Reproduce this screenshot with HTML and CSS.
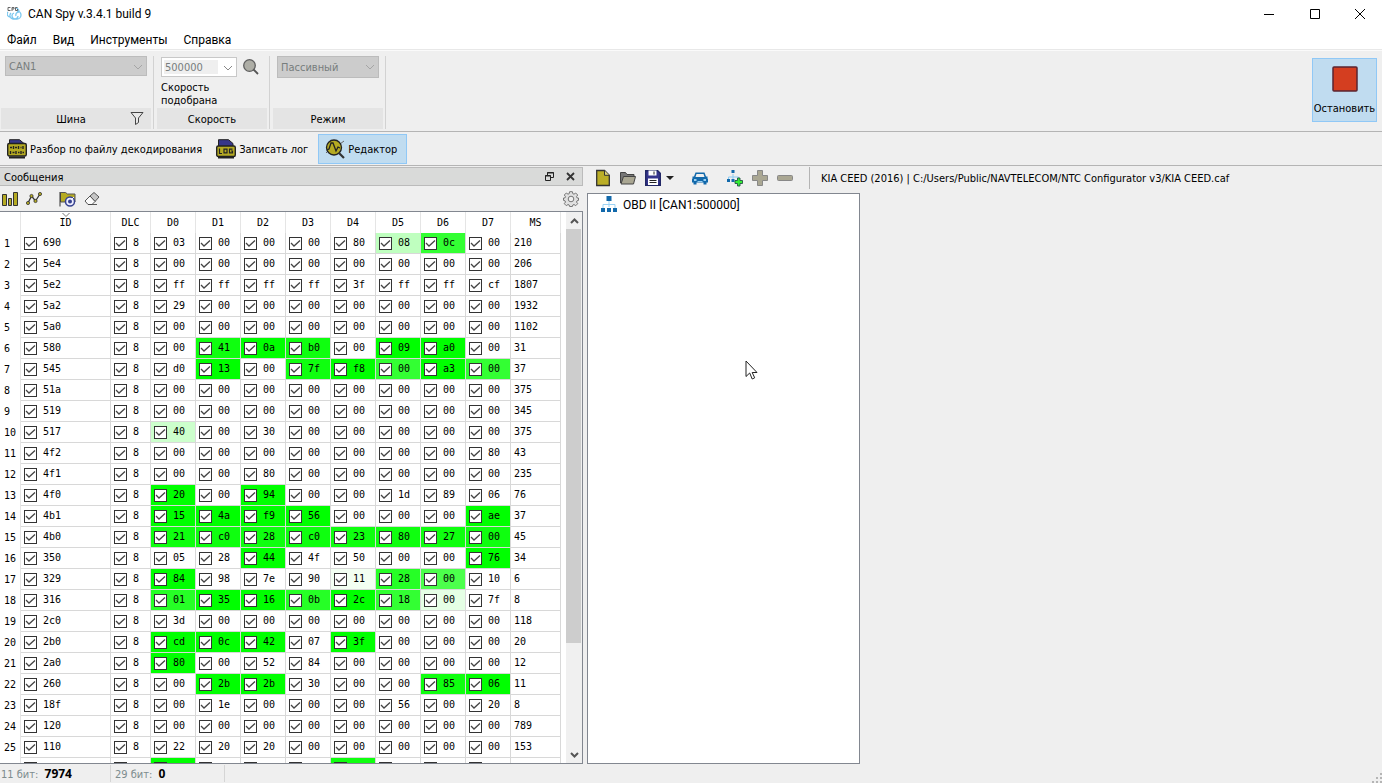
FILE: index.html
```html
<!DOCTYPE html>
<html lang="ru">
<head>
  <meta charset="UTF-8">
  <title>CAN Spy v.3.4.1 build 9</title>
  <meta name="viewport" content="width=device-width, initial-scale=1.0">
  <link rel="stylesheet" href="styles.css">
</head>
<body>

  <header class="titlebar">
    <svg class="app-icon" width="16" height="16" viewBox="0 0 16 16" fill="none">
      <path d="M1 6a3 3 0 0 0 2 5M8 2a3.500 3.500 0 0 1 4 3M10 5a4 4 0 1 1 0 8H6a3.500 3.500 0 0 1-2-6M7 7a3 3 0 1 0 4 3M12 6a3 3 0 0 0-3 4" stroke="#7cc8ef" stroke-width="1.300"/>
      <path d="M3.500 1.500H1v3h2.500M5 5v-3.500h2v1.500H5M10.500 1.500H8.500v3h2V3" stroke="#666"/>
    </svg>
    <h1>CAN Spy v.3.4.1 build 9</h1>
    <div class="window-buttons">
      <button type="button" aria-label="Свернуть"><svg width="12" height="12" viewBox="0 0 12 12"><path d="M1 6.500h10" stroke="#000"/></svg></button>
      <button type="button" aria-label="Развернуть"><svg width="12" height="12" viewBox="0 0 12 12"><path d="M1.500 1.500h9v9h-9z" fill="none" stroke="#000"/></svg></button>
      <button type="button" aria-label="Закрыть"><svg width="12" height="12" viewBox="0 0 12 12"><path d="M1 1l10 10M11 1L1 11" stroke="#000"/></svg></button>
    </div>
  </header>

  <nav class="menu">
    <button type="button">Файл</button>
    <button type="button">Вид</button>
    <button type="button">Инструменты</button>
    <button type="button">Справка</button>
  </nav>

  <section class="ribbon">
    <div class="group group-bus">
      <div class="group-body">
        <div class="combo">
          <select aria-label="Шина" disabled><option>CAN1</option></select>
          <svg width="10" height="6" viewBox="0 0 10 6"><path d="M1 1l4 4 4-4" fill="none" stroke="#a5a5a5"/></svg>
        </div>
      </div>
      <div class="group-caption">
        <span>Шина</span>
        <button type="button" class="filter" aria-label="Фильтр">
          <svg width="14" height="14" viewBox="0 0 14 14"><path d="M1 1.500h12L8.500 7v4.500l-3 2V7z" fill="#e8e8e8" stroke="#444"/></svg>
        </button>
      </div>
    </div>
    <div class="group">
      <div class="group-body">
        <div class="speed">
          <div class="combo combo-edit">
            <select aria-label="Скорость" disabled><option>500000</option></select>
            <svg width="10" height="6" viewBox="0 0 10 6"><path d="M1 1l4 4 4-4" fill="none" stroke="#888"/></svg>
          </div>
          <button type="button" aria-label="Определить скорость">
            <svg width="16" height="16" viewBox="0 0 16 16"><circle cx="6.500" cy="6.500" r="5.800" fill="#aeaea6" stroke="#5f5f5f" stroke-width="1.300"/><path d="M10.500 10.500L15 15" stroke="#555" stroke-width="1.800"/></svg>
          </button>
        </div>
        <p class="speed-note">Скорость<br>подобрана</p>
      </div>
      <div class="group-caption"><span>Скорость</span></div>
    </div>
    <div class="group">
      <div class="group-body">
        <div class="combo combo-mode">
          <select aria-label="Режим" disabled><option>Пассивный</option></select>
          <svg width="10" height="6" viewBox="0 0 10 6"><path d="M1 1l4 4 4-4" fill="none" stroke="#a5a5a5"/></svg>
        </div>
      </div>
      <div class="group-caption"><span>Режим</span></div>
    </div>
    <button type="button" class="stop">
      <svg width="26" height="26" viewBox="0 0 26 26"><rect x="1" y="1" width="24" height="24" rx="1" fill="#d43e20" stroke="#5a2530" stroke-width="1.500"/></svg>
      <span>Остановить</span>
    </button>
  </section>

  <div class="toolbar">
    <button type="button">
      <svg width="20" height="20" viewBox="0 0 20 20">
        <path d="M2.500 5V.7h10L17 4.500V6" fill="#36368a" stroke="#222"/>
        <rect x=".7" y="4.500" width="18.600" height="12.500" rx="1.500" fill="#b5aa22" stroke="#222" stroke-width="1.400"/>
        <path d="M2 18.500h16" stroke="#222" stroke-width="2"/>
        <path d="M3 8.500h2M6.500 7v3M8 8.500h2M11.500 7v3M13.500 8.500h1M16 7v3M3.500 12v3M5.500 13.500h2M9 12v3M11 13.500h1.500M14 12v3M15.500 13.500H17" stroke="#222" stroke-width="1.400"/>
      </svg>
      <span>Разбор по файлу декодирования</span>
    </button>
    <button type="button">
      <svg width="20" height="20" viewBox="0 0 20 20">
        <path d="M2.500 7V.7h10L17 4.500V7" fill="#36368a" stroke="#222"/>
        <rect x=".7" y="7" width="18.600" height="10.500" rx="1.500" fill="#b5aa22" stroke="#222" stroke-width="1.400"/>
        <path d="M2 18.500h16" stroke="#222" stroke-width="2"/>
        <path d="M3.500 9.500v5H6M8 10.200h3v3.600H8zM16.500 10.200h-3v3.600h3V12H15" fill="none" stroke="#222" stroke-width="1.200"/>
      </svg>
      <span>Записать лог</span>
    </button>
    <button type="button" class="active">
      <svg width="20" height="20" viewBox="0 0 20 20">
        <path d="M1 14l3-3M15 5l4-3" stroke="#666"/>
        <circle cx="9" cy="8.500" r="7.500" fill="#b5aa22" stroke="#222" stroke-width="1.300"/>
        <path d="M2 11l2-1 2-6h2l3 8 2-4 2 1" fill="none" stroke="#222" stroke-width="1.300"/>
        <path d="M14 14l5 5" stroke="#333" stroke-width="2.200"/>
      </svg>
      <span>Редактор</span>
    </button>
  </div>

  <main class="workspace">
    <section class="dock">
      <div class="dock-title">
        <h2>Сообщения</h2>
        <button type="button" aria-label="Открепить"><svg width="9" height="9" viewBox="0 0 9 9" fill="none" stroke="#222"><path d="M2.500 3V.5h6v5H6M2 1h7"/><path d="M.5 3.500h5v5h-5zM0 4h6"/></svg></button>
        <button type="button" aria-label="Закрыть панель"><svg width="9" height="9" viewBox="0 0 9 9"><path d="M1 1l7 7M8 1L1 8" stroke="#333" stroke-width="1.800"/></svg></button>
      </div>

      <div class="dock-tools">
        <button type="button" aria-label="Гистограмма"><svg width="16" height="16" viewBox="0 0 16 16" fill="#b5aa22" stroke="#333"><path d="M.5 3.500h4v11h-4zM6.500 7.500h3v7h-3zM11.500 1.500h4v13h-4z"/></svg></button>
        <button type="button" aria-label="График"><svg width="16" height="16" viewBox="0 0 16 16"><path d="M2 12l3.500-7 4 5L14 3" fill="none" stroke="#333" stroke-width="1.300"/><g fill="#b5aa22" stroke="#333" stroke-width=".8"><circle cx="2" cy="12" r="1.600"/><circle cx="5.500" cy="5" r="1.600"/><circle cx="9.500" cy="10" r="1.600"/><circle cx="14" cy="3" r="1.600"/></g></svg></button>
        <button type="button" class="flag" aria-label="Метка"><svg width="17" height="16" viewBox="0 0 17 16"><path d="M1.500 11V1.500h5l2 1.500h7.500v8z" fill="#b5aa22" stroke="#555"/><path d="M1 1v14.500" stroke="#333"/><circle cx="11" cy="10.500" r="4.500" fill="#eef" stroke="#36428f" stroke-width="1.500"/><circle cx="11" cy="10.500" r="2" fill="#36428f"/><path d="M12 9l3-3" stroke="#eef"/></svg></button>
        <button type="button" aria-label="Очистить"><svg width="16" height="16" viewBox="0 0 16 16" stroke="#444" stroke-width=".9"><path d="M6 5l4-3.500 5 4.500-4 4.500z" fill="#c5c5c5"/><path d="M6 5l5 5.500-3 3H4L1 10z" fill="#fafafa"/><path d="M4 13.500h9"/></svg></button>
        <button type="button" class="gear" aria-label="Настройки"><svg width="16" height="16" viewBox="0 0 16 16" fill="none" stroke="#777"><path d="M6.600.7h2.800l.4 2 1.200.5L12.700 2l2 2-1.200 1.700.5 1.200 1.500.1v2.400l-1.500.4-.5 1.200 1.200 1.700-2 2-1.700-1.200-1.200.5-.4 1.500H6.600l-.4-1.500-1.200-.5-1.700 1.200-2-2 1.200-1.700-.5-1.200-1.500-.4V7l1.500-.1.500-1.200L1.300 4l2-2L5 3.200l1.200-.5z" fill="#e0e0e0"/><circle cx="8" cy="8" r="2.800" fill="#efefef"/></svg></button>
      </div>

      <div class="grid-box">
        <div class="grid-view">
          <table id="messages">
            <colgroup>
              <col class="c-num"><col class="c-id"><col class="c-dlc">
              <col class="c-byte" span="8"><col class="c-ms">
            </colgroup>
            <thead>
              <tr>
                <th></th>
                <th class="sorted">ID<svg width="8" height="4" viewBox="0 0 8 4"><path d="M.5 0L4 3.500 7.500 0" fill="none" stroke="#777"/></svg></th>
                <th>DLC</th>
                <th>D0</th><th>D1</th><th>D2</th><th>D3</th>
                <th>D4</th><th>D5</th><th>D6</th><th>D7</th>
                <th>MS</th>
              </tr>
            </thead>
            <tbody></tbody>
          </table>
        </div>
        <div class="scrollbar">
          <button type="button" aria-label="Вверх"><svg width="9" height="6" viewBox="0 0 9 6"><path d="M1 5l3.500-3.500L8 5" fill="none" stroke="#555" stroke-width="2"/></svg></button>
          <div class="track"><div class="thumb"></div></div>
          <button type="button" aria-label="Вниз"><svg width="9" height="6" viewBox="0 0 9 6"><path d="M1 1l3.500 3.500L8 1" fill="none" stroke="#555" stroke-width="2"/></svg></button>
        </div>
      </div>
    </section>

    <section class="editor">
      <div class="editor-tools">
        <button type="button" aria-label="Новый"><svg width="16" height="18" viewBox="0 0 16 18"><path d="M1.700 1.500h7.800l4.800 4.800v10.200H1.700z" fill="#bbae27" stroke="#333" stroke-width="1.300"/><path d="M9.500 1.500v4.800h4.800" fill="#ddd37a" stroke="#333"/></svg></button>
        <button type="button" aria-label="Открыть"><svg width="16" height="18" viewBox="0 0 16 18" stroke="#444"><path d="M.5 14V3.500h5l1.500 2h7V8" fill="#777"/><path d="M1 15l2.500-7.500h12L13.500 15z" fill="#aaa793"/></svg></button>
        <button type="button" aria-label="Сохранить"><svg width="16" height="18" viewBox="0 0 16 18"><path d="M.7 1.700h12l2.600 2.600v12H.7z" fill="#35358c" stroke="#222866" stroke-width="1.400"/><path d="M3.500 1.500h8v5h-8zM3 9.500h10V16H3z" fill="#fff"/><path d="M9 2.500v3M4.500 11.500h7M4.500 13.500h7" stroke="#222"/></svg></button>
        <button type="button" class="drop" aria-label="Сохранить как"><svg width="8" height="4" viewBox="0 0 8 4"><path d="M0 0h8L4 4z" fill="#222"/></svg></button>
        <button type="button" class="car" aria-label="Автомобиль"><svg width="16" height="18" viewBox="0 0 16 18" fill="#1269ab"><path d="M3.500 3.500h9l1.500 4h1.500v2l.5.500v3.500h-1.500v2h-3v-2h-7v2h-3v-2H0V10l.5-.5v-2H2zM4.500 5L3.500 8h9l-1-3z" fill-rule="evenodd"/><path d="M2 10h2.500v2H2zM11.500 10H14v2h-2.500zM5.500 12h5v1h-5z" fill="#9bd0f2"/></svg></button>
        <button type="button" class="net" aria-label="Добавить сеть"><svg width="16" height="18" viewBox="0 0 16 18"><path d="M6 5v3M1.500 10V8h10v2M6 8v3" fill="none" stroke="#8acbf3"/><path d="M4.500 1h3v3h-3zM0 10h3v3H0zM4.500 10h3v3h-3z" fill="#1269ab"/><path d="M10.500 9h2.500v2.500h2.500v3H13V17h-2.500v-2.500H8v-3h2.500z" fill="#34ef34" stroke="#254" stroke-width=".9"/></svg></button>
        <button type="button" aria-label="Добавить"><svg width="16" height="18" viewBox="0 0 16 18"><path d="M5.500 1.500h5v5h5v5h-5v5h-5v-5h-5v-5h5z" fill="#aaa793" stroke="#888"/></svg></button>
        <button type="button" aria-label="Удалить"><svg width="16" height="18" viewBox="0 0 16 18"><rect x=".5" y="6.500" width="15" height="5" rx="1" fill="#aaa793" stroke="#888"/></svg></button>
        <span class="path">KIA CEED (2016) | C:/Users/Public/NAVTELECOM/NTC Configurator v3/KIA CEED.caf</span>
      </div>
      <div class="tree">
        <div class="tree-item">
          <svg width="16" height="16" viewBox="0 0 16 16"><path d="M8 5v6M2 12V8.500h12V12" fill="none" stroke="#9bd3f5"/><path d="M5.500 0h5v5h-5zM0 12h4v4H0zM6 12h4v4H6zM12 12h4v4h-4z" fill="#1269ab"/></svg>
          <span>OBD II [CAN1:500000]</span>
        </div>
        <svg class="pointer" width="13" height="20" viewBox="0 0 13 20"><path d="M1 1v15.500l3.700-3.500L7.200 19l2.500-1.200-2.500-5.300H12z" fill="#fff" stroke="#222"/></svg>
      </div>
    </section>
  </main>

  <footer class="status">
    <div>11 бит: <b>7974</b></div>
    <div>29 бит: <b>0</b></div>
    <svg class="grip" width="10" height="10" viewBox="0 0 10 10" fill="#b5b5b5"><path d="M8 0h2v2H8zM4 4h2v2H4zM8 4h2v2H8zM0 8h2v2H0zM4 8h2v2H4zM8 8h2v2H8z"/></svg>
  </footer>

  <script src="script.js"></script>
</body>
</html>
```
FILE: styles.css
```css
* {
  box-sizing: border-box;
}
body {
  margin: 0;
  height: 100vh;
  display: flex;
  flex-direction: column;
  overflow: hidden;
  background-color: #efefef;
  color: #000;
  font-family: "DejaVu Sans Condensed", "DejaVu Sans", sans-serif;
  font-size: 11px;
  line-height: 14px;
}
h1, h2, p {
  margin: 0;
  font-size: inherit;
  font-weight: normal;
}
button {
  display: flex;
  align-items: center;
  justify-content: center;
  padding: 0;
  border: none;
  background: none;
  color: inherit;
  font: inherit;
  white-space: nowrap;
}
svg {
  display: block;
  flex: none;
}

/* title and menu */
.titlebar {
  display: flex;
  align-items: center;
  height: 28px;
  padding-left: 7px;
  gap: 5px;
  background-color: #fff;
  font-family: Roboto, sans-serif;
  font-size: 12px;
}
.window-buttons {
  display: flex;
  margin-left: auto;
}
.window-buttons button {
  width: 46px;
  height: 28px;
}
.window-buttons button:last-child {
  width: 44px;
}
.menu {
  display: flex;
  height: 22px;
  padding: 2px 0 0 7px;
  gap: 16px;
  background-color: #fff;
  border-bottom: 1px solid #e8e8e8;
  font-family: Roboto, sans-serif;
  font-size: 12px;
}

/* ribbon */
.ribbon {
  display: flex;
  height: 82px;
  padding: 5px 5px 2px 1px;
  border-top: 1px solid #fafafa;
  border-bottom: 1px solid #b4b4b4;
}
.group {
  display: flex;
  flex-direction: column;
  width: 116px;
  padding: 0 2px 0 3px;
  border-right: 1px solid #d2d2d2;
}
.group-bus {
  width: 153px;
  padding-left: 0;
}
.group-body {
  flex: 1;
  padding: 0 4px;
}
.group-caption {
  position: relative;
  display: flex;
  align-items: center;
  justify-content: center;
  height: 21px;
  padding-top: 2px;
  background-color: #e4e4e4;
}
.group-bus .group-caption {
  padding-right: 10px;
}
.filter {
  position: absolute;
  right: 7px;
  top: 3px;
}
.combo {
  position: relative;
  width: 142px;
  height: 20px;
}
.combo select {
  display: block;
  width: 100%;
  height: 100%;
  padding: 2px 3px 0;
  border: 1px solid #bcbcbc;
  border-radius: 0;
  background-color: #ccc;
  color: #777d7d;
  font: inherit;
  opacity: 1;
  appearance: none;
}
.combo svg {
  position: absolute;
  right: 4px;
  top: 8px;
}
.combo-edit {
  width: 76px;
}
.combo-edit select {
  border-color: #c8c8c8;
  background: linear-gradient(#efefef, #efefef) 2px 2px / 54px 14px no-repeat #fff;
}
.combo-mode {
  width: 102px;
  height: 22px;
}
.speed {
  display: flex;
  align-items: center;
  gap: 6px;
  margin-top: 1px;
}
.speed-note {
  margin-top: 4px;
  line-height: 13px;
}
.stop {
  flex-direction: column;
  justify-content: flex-start;
  gap: 10px;
  min-width: 65px;
  height: 64px;
  margin: 2px 0 0 auto;
  padding-top: 7px;
  border: 1px solid #90c8f6;
  background-color: #c0dcf0;
}

/* main toolbar */
.toolbar {
  display: flex;
  align-items: center;
  height: 34px;
  padding-left: 6px;
  gap: 5px;
  border-bottom: 1px solid #b4b4b4;
}
.toolbar button {
  height: 30px;
  padding: 0 1px;
  gap: 3px;
}
.toolbar button + button {
  padding: 0 8px;
}
.toolbar span {
  padding-top: 2px;
}
.toolbar .active {
  padding: 0 9px 0 6px;
  margin-left: -3px;
  border: 1px solid #90c8f6;
  background-color: #c0dcf0;
}

.workspace {
  display: flex;
  flex: 1;
  min-height: 0;
  gap: 4px;
}

/* messages dock */
.dock {
  display: flex;
  flex-direction: column;
  flex: 0 0 583px;
  padding-top: 1px;
}
.dock-title {
  display: flex;
  align-items: center;
  height: 19px;
  padding: 0 7px 0 4px;
  gap: 12px;
  border: 1px solid #bbb;
  border-left: none;
  background-color: #d9dad9;
}
.dock-title h2 {
  margin-right: auto;
  padding-top: 2px;
}
.dock-tools {
  display: flex;
  align-items: center;
  height: 25px;
  padding: 0 4px 0 2px;
  gap: 8px;
}
.flag {
  margin-left: 9px;
}
.gear {
  margin-left: auto;
}
.grid-box {
  display: flex;
  flex: 1;
  min-height: 0;
  border: 1px solid #828790;
  border-left: none;
  background-color: #fff;
}
.grid-view {
  flex: 1;
  overflow: hidden;
}
table {
  width: 561px;
  table-layout: fixed;
  border-collapse: separate;
  border-spacing: 0;
  font-family: "DejaVu Sans Mono", monospace;
  font-size: 10px;
  line-height: 14px;
}
.c-num {
  width: 21px;
}
.c-id {
  width: 90px;
}
.c-dlc {
  width: 40px;
}
.c-byte {
  width: 45px;
}
.c-ms {
  width: 50px;
}
th, td {
  height: 21px;
  padding: 0;
  font-weight: normal;
}
th {
  border-right: 1px solid #e5e5e5;
}
td {
  padding-left: 3px;
  border-right: 1px solid #d8d8d8;
  border-bottom: 1px solid #d8d8d8;
}
tbody th {
  padding-left: 4px;
  text-align: left;
}
.sorted {
  position: relative;
}
.sorted svg {
  position: absolute;
  left: 41px;
  top: 1px;
}
td label {
  display: flex;
  align-items: center;
  gap: 6px;
}
td input {
  appearance: none;
  width: 13px;
  height: 13px;
  margin: 0;
  border: 1px solid #333;
  background-color: #fff;
}
td input:checked {
  background-image: url("data:image/svg+xml,%3Csvg xmlns='http://www.w3.org/2000/svg' viewBox='0 0 11 11'%3E%3Cpath d='M1 5l3 3 6-5.500' fill='none' stroke='%23444' stroke-width='1.300'/%3E%3C/svg%3E");
}
.scrollbar {
  display: flex;
  flex-direction: column;
  width: 16px;
  background-color: #f0f0f0;
}
.scrollbar button {
  height: 17px;
}
.track {
  flex: 1;
}
.thumb {
  width: 15px;
  height: 80%;
  background-color: #cdcdcd;
}

/* editor */
.editor {
  display: flex;
  flex-direction: column;
  flex: 1;
  min-width: 0;
}
.editor-tools {
  display: flex;
  align-items: center;
  height: 27px;
  padding: 0 0 4px 8px;
  gap: 9px;
}
.drop {
  margin-left: -4px;
}
.car {
  margin-left: 9px;
}
.net {
  margin-left: 10px;
}
.path {
  margin-left: 7px;
  padding: 5px 0 3px 11px;
  border-left: 1px solid #b4b4b4;
  white-space: nowrap;
}
.tree {
  position: relative;
  flex: 1;
  width: 273px;
  padding: 2px 13px;
  border: 1px solid #828790;
  background-color: #fff;
  font-family: Roboto, sans-serif;
  font-size: 12px;
}
.tree-item {
  display: flex;
  align-items: center;
  gap: 6px;
}
.tree-item span {
  padding-top: 2px;
}
.pointer {
  position: absolute;
  left: 157px;
  top: 166px;
}

/* status bar */
.status {
  display: flex;
  align-items: center;
  height: 19px;
  color: #7d8c8e;
}
.status div {
  width: 111px;
  padding: 2px 0 0 1px;
  border-right: 1px solid #d5d5d5;
}
.status div + div {
  width: 114px;
  padding-left: 4px;
}
.status b {
  margin-left: 3px;
  color: #000;
  font-family: "Noto Sans", sans-serif;
  font-size: 12px;
}
.grip {
  margin-left: auto;
  align-self: flex-end;
}
```
FILE: script.js
```js
// id, dlc, d0..d7, ms
const messages = `
690 8 03 00 00 00 80 08 0c 00 210
5e4 8 00 00 00 00 00 00 00 00 206
5e2 8 ff ff ff ff 3f ff ff cf 1807
5a2 8 29 00 00 00 00 00 00 00 1932
5a0 8 00 00 00 00 00 00 00 00 1102
580 8 00 41 0a b0 00 09 a0 00 31
545 8 d0 13 00 7f f8 00 a3 00 37
51a 8 00 00 00 00 00 00 00 00 375
519 8 00 00 00 00 00 00 00 00 345
517 8 40 00 30 00 00 00 00 00 375
4f2 8 00 00 00 00 00 00 00 80 43
4f1 8 00 00 80 00 00 00 00 00 235
4f0 8 20 00 94 00 00 1d 89 06 76
4b1 8 15 4a f9 56 00 00 00 ae 37
4b0 8 21 c0 28 c0 23 80 27 00 45
350 8 05 28 44 4f 50 00 00 76 34
329 8 84 98 7e 90 11 28 00 10 6
316 8 01 35 16 0b 2c 18 00 7f 8
2c0 8 3d 00 00 00 00 00 00 00 118
2b0 8 cd 0c 42 07 3f 00 00 00 20
2a0 8 80 00 52 84 00 00 00 00 12
260 8 00 2b 2b 30 00 00 85 06 11
18f 8 00 1e 00 00 00 56 00 20 8
120 8 00 00 00 00 00 00 00 00 789
110 8 22 20 20 00 00 00 00 00 153`.trim().split('\n').map(line => line.split(' '));

// next row, still waiting for its data
messages.push(Array(11).fill(''));

// how recently a byte changed: row -> { byte: level in % }
const changes = {
  1: { 5: 25, 6: 80 },
  6: { 1: 94, 2: 100, 3: 94, 5: 100, 6: 100 },
  7: { 1: 100, 3: 94, 4: 100, 5: 80, 6: 100, 7: 80 },
  10: { 0: 20 },
  13: { 0: 100, 2: 100 },
  14: { 0: 100, 1: 100, 2: 100, 3: 100, 7: 100 },
  15: { 0: 94, 1: 94, 2: 94, 3: 94, 4: 94, 5: 94, 6: 94, 7: 94 },
  16: { 2: 100, 7: 100 },
  17: { 0: 100, 4: 5, 5: 85, 6: 70 },
  18: { 0: 85, 1: 100, 2: 100, 3: 85, 4: 100, 5: 80, 6: 10 },
  20: { 0: 100, 1: 100, 2: 100, 4: 100 },
  21: { 0: 100 },
  22: { 1: 100, 2: 100, 6: 94, 7: 100 },
  26: { 0: 100, 4: 94 }
};

const tbody = document.querySelector('#messages tbody');

messages.forEach((values, index) => {
  const number = index + 1;
  const row = document.createElement('tr');
  let html = `<th>${values[0] ? number : ''}</th>`;
  values.forEach((value, col) => {
    if (col === 10) {
      html += `<td>${value}</td>`;
      return;
    }
    const level = (changes[number] || {})[col - 2];
    const style = level ? ` style="background-color: rgba(0, 255, 0, ${level / 100})"` : '';
    html += `<td${style}><label><input type="checkbox" checked>${value}</label></td>`;
  });
  row.innerHTML = html;
  tbody.appendChild(row);
});
```
